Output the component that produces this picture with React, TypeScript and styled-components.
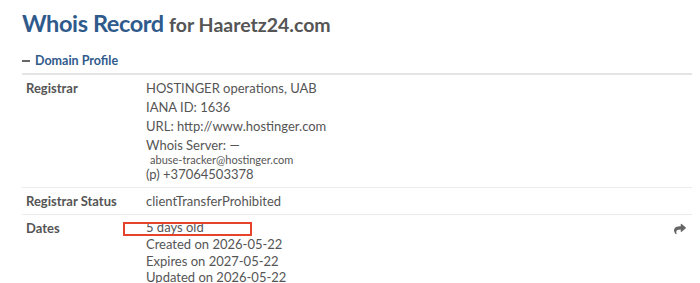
import React from "react";
import styled, { createGlobalStyle } from "styled-components";
import { FaShare } from "react-icons/fa";

const Global = createGlobalStyle`
  html, body { margin: 0; padding: 0; background: #fff; }
  body { font-family: Lato, "Open Sans", sans-serif; color: #555; }
`;

const Page = styled.div`
  padding: 8px 8px 0 22px;
`;

const Title = styled.h1`
  margin: 0;
  font-size: 23.5px;
  letter-spacing: -0.4px;
  line-height: 30px;
  font-weight: 700;
  color: #2f5a8c;
`;

const TitleSub = styled.span`
  font-size: 19.5px;
  letter-spacing: 0;
  color: #555;
  font-weight: 700;
`;

const SectionHeader = styled.div`
  margin-top: 13px;
  display: flex;
  align-items: center;
  gap: 5px;
  padding-bottom: 4px;
  border-bottom: 2px solid #e4e4e4;
  font-size: 12.5px;
  line-height: 16px;
  font-weight: 700;
  color: #2f5a8c;
`;

const Minus = styled.span`
  display: inline-block;
  width: 8px;
  height: 2px;
  background: #666;
`;

const Row = styled.div<{ $last?: boolean }>`
  display: grid;
  grid-template-columns: 120px 1fr 30px;
  padding: 4px 0 3px 4px;
  border-bottom: ${(p) => (p.$last ? "none" : "1px solid #ececec")};
  font-size: 13px;
  line-height: 19px;
`;

const Label = styled.div`
  font-weight: 700;
  color: #555;
`;

const Value = styled.div`
  color: #555;
`;

const Line = styled.div<{ $compact?: boolean }>`
  white-space: nowrap;
  line-height: ${(p) => (p.$compact ? "15px" : "19px")};
  margin-top: ${(p) => (p.$compact ? "2px" : "0")};
`;

const DateLine = styled.div`
  white-space: nowrap;
  line-height: 16.5px;
`;

const Marked = styled.div`
  position: relative;
  white-space: nowrap;
  line-height: 17px;
`;

const Small = styled.div`
  font-size: 11px;
  line-height: 10px;
  margin-top: 2px;
  padding-left: 4px;
  color: #555;
`;

const Highlight = styled.div`
  position: absolute;
  left: -23px;
  top: 3px;
  width: 125px;
  height: 10px;
  border: 2px solid #e5432c;
  pointer-events: none;
`;

const Action = styled.div`
  display: flex;
  justify-content: flex-end;
  align-items: center;
  height: 19px;
  padding-right: 6px;
  color: #666;
  font-size: 12px;
`;

export default function App() {
  return (
    <>
      <Global />
      <Page>
        <Title>
          Whois Record <TitleSub>for Haaretz24.com</TitleSub>
        </Title>
        <SectionHeader>
          <Minus />
          Domain Profile
        </SectionHeader>
        <Row>
          <Label>Registrar</Label>
          <Value>
            <Line>HOSTINGER operations, UAB</Line>
            <Line>IANA ID: 1636</Line>
            <Line>URL: http://www.hostinger.com</Line>
            <Line $compact>Whois Server: —</Line>
            <Small>abuse-tracker@hostinger.com</Small>
            <Line>(p) +37064503378</Line>
          </Value>
          <div />
        </Row>
        <Row>
          <Label>Registrar Status</Label>
          <Value>
            <Line>clientTransferProhibited</Line>
          </Value>
          <div />
        </Row>
        <Row $last>
          <Label>Dates</Label>
          <Value>
            <Marked>
              5 days old
              <Highlight />
            </Marked>
            <DateLine>Created on 2026-05-22</DateLine>
            <DateLine>Expires on 2027-05-22</DateLine>
            <DateLine>Updated on 2026-05-22</DateLine>
          </Value>
          <Action>
            <FaShare />
          </Action>
        </Row>
      </Page>
    </>
  );
}
